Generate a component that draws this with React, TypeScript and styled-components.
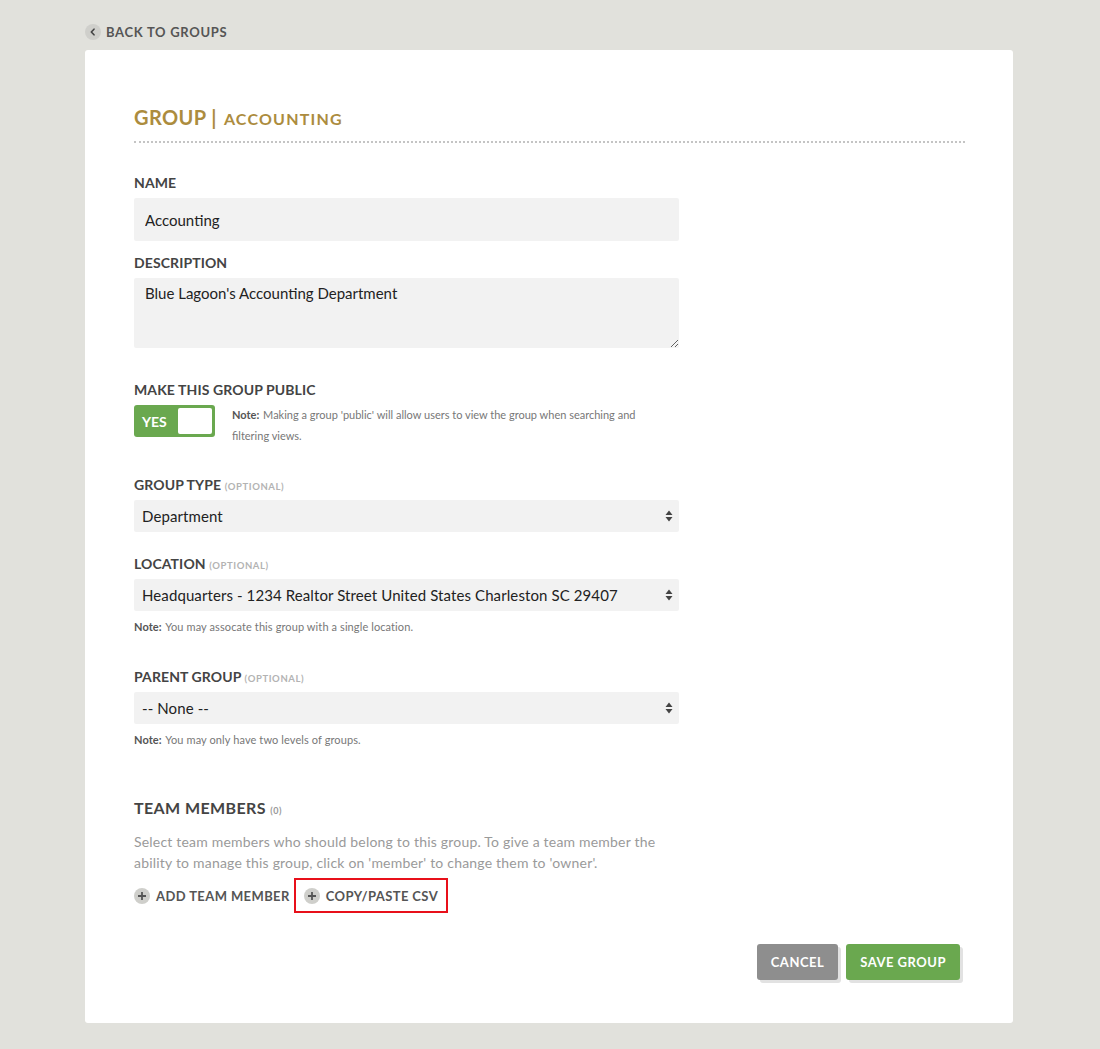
import React, { useState } from 'react';
import styled, { createGlobalStyle } from 'styled-components';

const GlobalStyle = createGlobalStyle`
  body {
    margin: 0;
    background: #e1e1dc;
    font-family: Lato, "Open Sans", sans-serif;
    color: #444;
  }
`;

const Page = styled.div`
  width: 928px;
  margin-left: 85px;
  padding: 22px 0 27px;
`;

const BackLink = styled.a`
  display: flex;
  align-items: center;
  gap: 5px;
  height: 20px;
  margin-bottom: 8px;
  font-size: 13px;
  font-weight: 700;
  letter-spacing: 0.7px;
  color: #555;
  text-decoration: none;
  cursor: pointer;
`;

const RoundIcon = styled.span`
  display: inline-flex;
  align-items: center;
  justify-content: center;
  width: 16px;
  height: 16px;
  border-radius: 50%;
  background: #cfcfcb;
  flex-shrink: 0;
`;

const Card = styled.div`
  background: #fff;
  border-radius: 3px;
  padding: 54px 48px 43px 49px;
`;

const Title = styled.h1`
  display: flex;
  align-items: baseline;
  gap: 7px;
  height: 26px;
  margin: 0;
  padding-bottom: 11px;
  border-bottom: 2px dotted #c4c4c4;
  line-height: 26px;
  font-size: 20px;
  font-weight: 700;
  letter-spacing: 0.4px;
  color: #ac8c3e;
`;

const SubTitle = styled.span`
  font-size: 16px;
  letter-spacing: 1.2px;
`;

const Form = styled.form`
  width: 545px;
`;

const Label = styled.div<{ $gap: number }>`
  height: 18px;
  margin-top: ${p => p.$gap}px;
  margin-bottom: 6px;
  line-height: 18px;
  font-size: 14px;
  font-weight: 700;
  letter-spacing: 0.1px;
  color: #444;
`;

const Optional = styled.span`
  line-height: 1;
  font-size: 9.5px;
  font-weight: 700;
  letter-spacing: 0.6px;
  color: #b3b3b3;
`;

const TextInput = styled.input`
  display: block;
  box-sizing: border-box;
  width: 100%;
  height: 43px;
  padding: 0 11px;
  border: none;
  border-radius: 2px;
  background: #f2f2f2;
  font-family: inherit;
  font-size: 15px;
  color: #222;
  outline: none;
`;

const TextArea = styled.textarea`
  display: block;
  box-sizing: border-box;
  width: 100%;
  height: 70px;
  padding: 5px 11px;
  border: none;
  border-radius: 2px;
  background: #f2f2f2;
  font-family: inherit;
  font-size: 15px;
  line-height: 20px;
  color: #222;
  resize: vertical;
  outline: none;
`;

const ToggleRow = styled.div`
  display: flex;
  align-items: flex-start;
  gap: 17px;
`;

const Toggle = styled.button<{ $on: boolean }>`
  display: flex;
  align-items: center;
  justify-content: space-between;
  flex-shrink: 0;
  width: 81px;
  height: 32px;
  padding: 0 3px 0 8px;
  border: none;
  border-radius: 3px;
  background: ${p => (p.$on ? '#6aa84f' : '#999')};
  color: #fff;
  font-family: inherit;
  font-size: 14px;
  font-weight: 700;
  cursor: pointer;
`;

const Knob = styled.span`
  width: 34px;
  height: 26px;
  border-radius: 2px;
  background: #fff;
`;

const Note = styled.p<{ $gap?: number }>`
  margin: ${p => p.$gap ?? 0}px 0 0;
  font-size: 11px;
  line-height: 16px;
  letter-spacing: 0.1px;
  color: #777;
  b {
    margin-right: 1px;
    color: #555;
  }
`;

const ToggleNote = styled(Note)`
  max-width: 422px;
  margin-top: -1px;
  line-height: 21px;
  letter-spacing: 0;
`;

const SelectBox = styled.div`
  position: relative;
`;

const Select = styled.select`
  display: block;
  box-sizing: border-box;
  width: 100%;
  height: 32px;
  padding: 0 30px 0 8px;
  border: none;
  border-radius: 2px;
  background: #f2f2f2;
  appearance: none;
  font-family: inherit;
  font-size: 15px;
  letter-spacing: 0.1px;
  color: #222;
  outline: none;
`;

const Arrows = styled.svg`
  position: absolute;
  right: 6px;
  top: 10px;
  pointer-events: none;
`;

const SectionTitle = styled.h2`
  margin: 49px 0 0;
  line-height: 22px;
  font-size: 16px;
  font-weight: 700;
  letter-spacing: 0.4px;
  color: #444;
`;

const Count = styled.span`
  font-size: 9px;
  letter-spacing: 0.5px;
  color: #999;
`;

const Help = styled.p`
  margin: 9px 0 0;
  font-size: 14px;
  line-height: 21px;
  letter-spacing: 0.2px;
  color: #9a9a9a;
`;

const ActionRow = styled.div`
  display: flex;
  align-items: center;
  gap: 4px;
  margin-top: 5px;
`;

const AddLink = styled.button<{ $marked?: boolean }>`
  display: inline-flex;
  align-items: center;
  gap: 6px;
  box-sizing: border-box;
  height: 35px;
  padding: 0 ${p => (p.$marked ? '8px' : '0')};
  border: ${p => (p.$marked ? '2px solid #e8101a' : 'none')};
  background: none;
  font-family: inherit;
  font-size: 13px;
  font-weight: 700;
  letter-spacing: 0.4px;
  color: #555;
  cursor: pointer;
`;

const Footer = styled.div`
  display: flex;
  justify-content: flex-end;
  gap: 8px;
  margin: 31px 5px 0 0;
`;

const ActionButton = styled.button<{ $primary?: boolean }>`
  height: 36px;
  padding: 0 14px;
  border: none;
  border-radius: 3px;
  background: ${p => (p.$primary ? '#6aa84f' : '#8e8e8e')};
  box-shadow: 3px 3px 0 #e2e2e2;
  color: #fff;
  font-family: inherit;
  font-size: 13px;
  font-weight: 700;
  letter-spacing: 0.5px;
  cursor: pointer;
`;

const Chevron = () => (
  <svg width="8" height="8" viewBox="0 0 8 8">
    <path d="M5 1.2 2.3 4 5 6.8" fill="none" stroke="#444" strokeWidth="1.6" strokeLinecap="round" strokeLinejoin="round" />
  </svg>
);

const Plus = () => (
  <svg width="10" height="10" viewBox="0 0 10 10">
    <path d="M5 1v8M1 5h8" stroke="#555" strokeWidth="1.8" />
  </svg>
);

const SelectField: React.FC<{ value: string; options: string[] }> = ({ value, options }) => {
  const [current, setCurrent] = useState(value);
  return (
    <SelectBox>
      <Select value={current} onChange={e => setCurrent(e.target.value)}>
        {options.map(o => (
          <option key={o}>{o}</option>
        ))}
      </Select>
      <Arrows width="8" height="12" viewBox="0 0 8 12">
        <path d="M4 0.5 7.5 5H0.5zM4 11.5 0.5 7h7z" fill="#444" />
      </Arrows>
    </SelectBox>
  );
};

const App: React.FC = () => {
  const [name, setName] = useState('Accounting');
  const [description, setDescription] = useState("Blue Lagoon's Accounting Department");
  const [isPublic, setPublic] = useState(true);

  return (
    <>
      <GlobalStyle />
      <Page>
        <BackLink>
          <RoundIcon><Chevron /></RoundIcon>
          BACK TO GROUPS
        </BackLink>
        <Card>
          <Title>
            GROUP | <SubTitle>ACCOUNTING</SubTitle>
          </Title>
          <Form onSubmit={e => e.preventDefault()}>
            <Label $gap={31}>NAME</Label>
            <TextInput value={name} onChange={e => setName(e.target.value)} />

            <Label $gap={13}>DESCRIPTION</Label>
            <TextArea value={description} onChange={e => setDescription(e.target.value)} />

            <Label $gap={33}>MAKE THIS GROUP PUBLIC</Label>
            <ToggleRow>
              <Toggle type="button" $on={isPublic} onClick={() => setPublic(!isPublic)}>
                {isPublic ? 'YES' : 'NO'}
                <Knob />
              </Toggle>
              <ToggleNote>
                <b>Note:</b> Making a group 'public' will allow users to view the group when searching and filtering views.
              </ToggleNote>
            </ToggleRow>

            <Label $gap={30}>GROUP TYPE <Optional>(OPTIONAL)</Optional></Label>
            <SelectField value="Department" options={['Department', 'Team', 'Office']} />

            <Label $gap={23}>LOCATION <Optional>(OPTIONAL)</Optional></Label>
            <SelectField
              value="Headquarters - 1234 Realtor Street United States Charleston SC 29407"
              options={['Headquarters - 1234 Realtor Street United States Charleston SC 29407']}
            />
            <Note $gap={8}><b>Note:</b> You may assocate this group with a single location.</Note>

            <Label $gap={33}>PARENT GROUP <Optional>(OPTIONAL)</Optional></Label>
            <SelectField value="-- None --" options={['-- None --']} />
            <Note $gap={8}><b>Note:</b> You may only have two levels of groups.</Note>

            <SectionTitle>TEAM MEMBERS <Count>(0)</Count></SectionTitle>
            <Help>
              Select team members who should belong to this group. To give a team member the ability to manage this group, click on 'member' to change them to 'owner'.
            </Help>
            <ActionRow>
              <AddLink type="button"><RoundIcon><Plus /></RoundIcon>ADD TEAM MEMBER</AddLink>
              <AddLink type="button" $marked><RoundIcon><Plus /></RoundIcon>COPY/PASTE CSV</AddLink>
            </ActionRow>
          </Form>
          <Footer>
            <ActionButton type="button">CANCEL</ActionButton>
            <ActionButton type="button" $primary>SAVE GROUP</ActionButton>
          </Footer>
        </Card>
      </Page>
    </>
  );
};

export default App;
